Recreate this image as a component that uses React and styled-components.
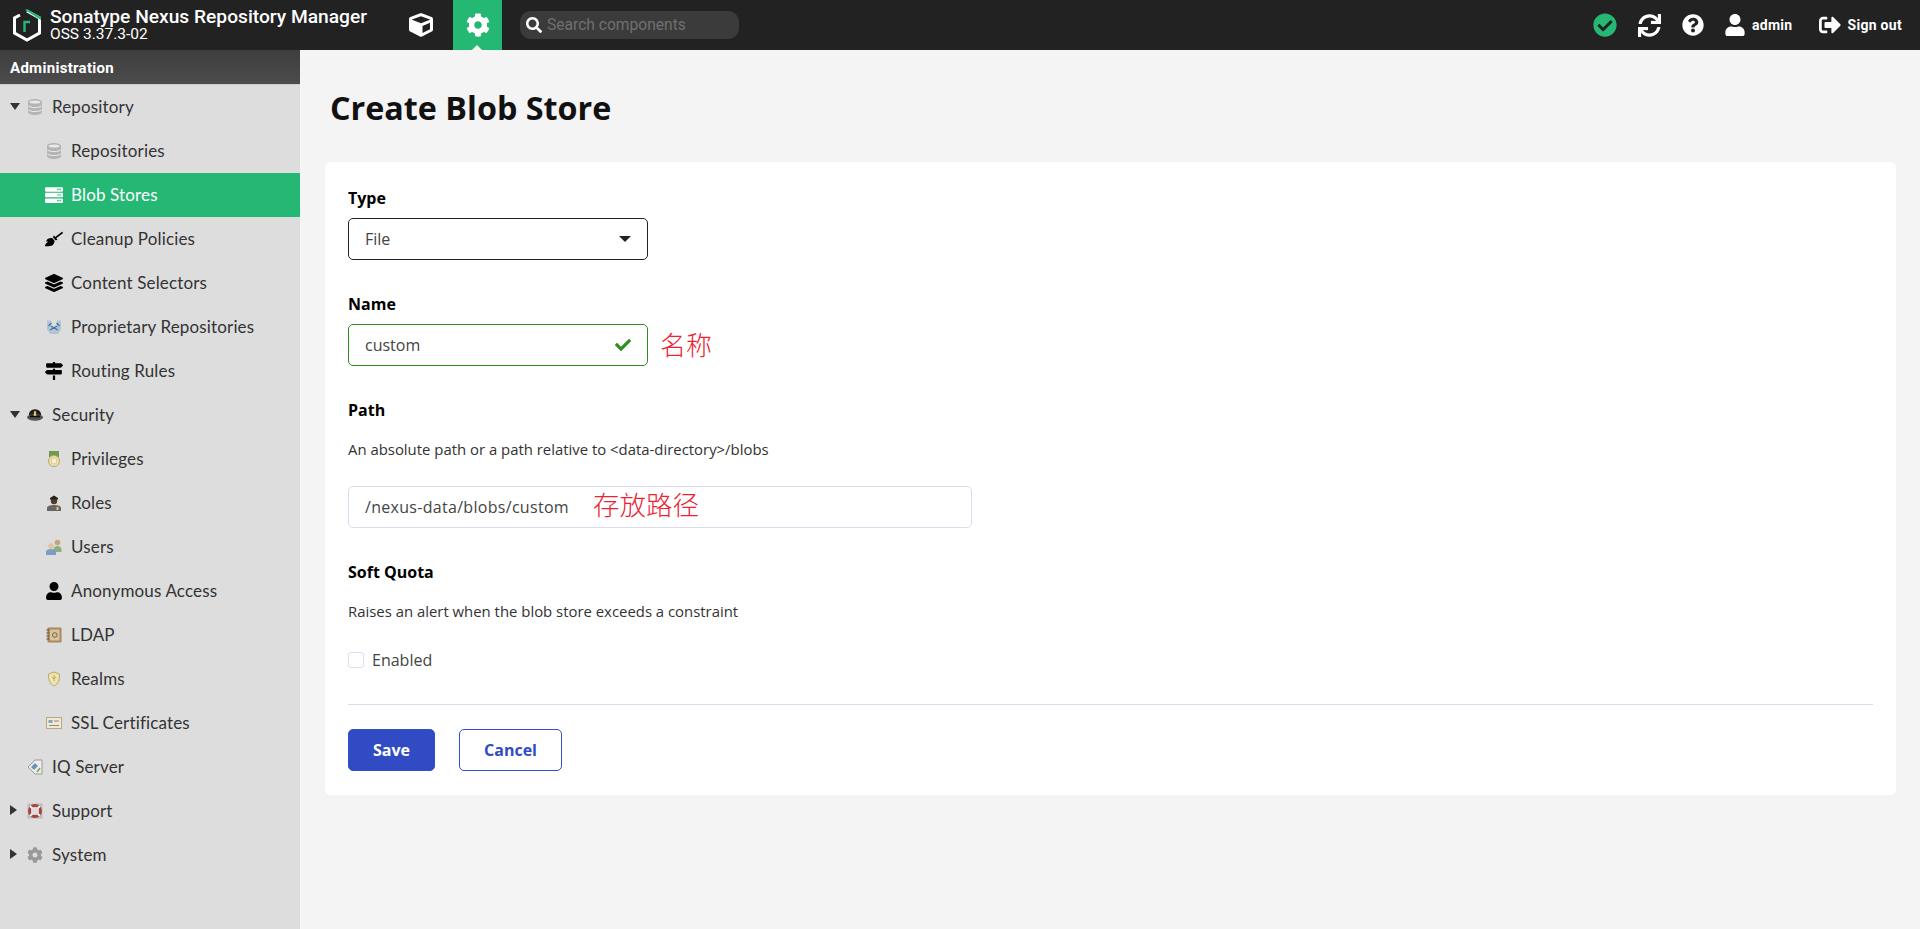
import React from 'react';
import styled, { createGlobalStyle } from 'styled-components';
import {
  FaCube, FaCog, FaSearch, FaCheckCircle, FaSync, FaQuestionCircle, FaUser,
  FaSignOutAlt, FaServer, FaBroom, FaLayerGroup, FaMapSigns, FaCheck,
} from 'react-icons/fa';

const GlobalStyle = createGlobalStyle`
  html, body { margin: 0; padding: 0; height: 100%; overflow: hidden; }
  body { font-family: "Open Sans", "Liberation Sans", sans-serif; background: #f4f4f4; }
  * { box-sizing: border-box; }
`;

const Shell = styled.div`
  display: grid;
  grid-template-columns: 300px 1fr;
  grid-template-rows: 50px 1fr;
  height: 929px;
`;

/* header */
const Header = styled.header`
  grid-column: 1 / 3;
  display: flex;
  align-items: center;
  background: #222;
  color: #fff;
  font-family: Roboto, "Liberation Sans", sans-serif;
`;

const Brand = styled.div`
  display: flex;
  align-items: center;
  gap: 8px;
  width: 396px;
  padding-left: 12px;
  flex: none;
`;

const BrandText = styled.div`
  display: flex;
  flex-direction: column;
`;

const BrandTitle = styled.span`
  font-size: 19.2px;
  font-weight: 500;
  line-height: 19px;
  white-space: nowrap;
`;

const BrandVersion = styled.span`
  font-size: 15.5px;
  line-height: 17px;
`;

const ModeTab = styled.div`
  position: relative;
  width: 49px;
  height: 50px;
  margin-right: ${(p) => p.$gap || 0}px;
  display: flex;
  align-items: center;
  justify-content: center;
  background: ${(p) => (p.$active ? '#25b875' : 'transparent')};
  font-size: 24px;
  &::after {
    content: '';
    display: ${(p) => (p.$active ? 'block' : 'none')};
    position: absolute;
    left: 19px;
    bottom: 0;
    border-left: 5px solid transparent;
    border-right: 5px solid transparent;
    border-bottom: 5px solid #f4f4f4;
  }
`;

const SearchBox = styled.div`
  width: 219px;
  height: 28px;
  margin-left: 18px;
  display: flex;
  align-items: center;
  gap: 5px;
  padding-left: 6px;
  background: #3b3b3b;
  border-radius: 11px;
  font-size: 15.6px;
  color: #707070;
  svg { color: #fff; font-size: 16px; }
`;

const HeaderRight = styled.div`
  margin-left: auto;
  display: flex;
  align-items: center;
  padding-right: 18px;
`;

const HeaderIcon = styled.span`
  display: flex;
  color: ${(p) => p.$color || '#fff'};
  font-size: ${(p) => p.$size || 22}px;
  margin-right: ${(p) => p.$gap || 0}px;
`;

const HeaderLabel = styled.span`
  font-size: 14px;
  font-weight: 700;
  letter-spacing: 0.3px;
  margin-right: ${(p) => p.$gap || 0}px;
`;

/* sidebar */
const Sidebar = styled.nav`
  background: #ddd;
  font-family: Lato, "Liberation Sans", sans-serif;
`;

const SideTitle = styled.div`
  height: 35px;
  padding: 1px 0 0 10px;
  display: flex;
  align-items: center;
  background: linear-gradient(#3e3e3e, #4c4c4c);
  border-bottom: 1px solid #ccc;
  color: #fff;
  font-size: 15px;
  font-weight: 700;
  letter-spacing: 0.3px;
  font-family: Roboto, "Liberation Sans", sans-serif;
`;

const NavRow = styled.div`
  position: relative;
  height: 44px;
  display: flex;
  align-items: center;
  padding-left: ${(p) => p.$indent}px;
  padding-bottom: 1px;
  font-size: 17px;
  letter-spacing: 0.15px;
  background: ${(p) => (p.$active ? '#25b875' : 'transparent')};
  color: ${(p) => (p.$active ? '#fff' : '#333')};
`;

const Caret = styled.span`
  position: absolute;
  left: 10px;
  top: 18px;
  width: 0;
  height: 0;
  ${(p) => (p.$open
    ? 'border-left: 5px solid transparent; border-right: 5px solid transparent; border-top: 7px solid #333;'
    : 'top: 16px; border-top: 5px solid transparent; border-bottom: 5px solid transparent; border-left: 7px solid #333;')}
`;

const NavIcon = styled.span`
  flex: none;
  width: ${(p) => p.$w}px;
  display: flex;
  align-items: center;
  justify-content: center;
  font-size: 18px;
  margin-right: ${(p) => p.$gap}px;
  color: ${(p) => (p.$active ? '#fff' : '#000')};
`;

/* colour icons */
const Svg = ({ children, size = 16 }) => (
  <svg width={size} height={size} viewBox="0 0 16 16">{children}</svg>
);

const LogoMark = () => (
  <svg width="30" height="33" viewBox="0 0 30 33" fill="none">
    <path d="M15 2 L27.5 9 V24 L15 31 L2.5 24 V9 L8 6" stroke="#fff" strokeWidth="3" />
    <path d="M13 1 L15 0 L29 8 V11 Z" fill="#25b875" />
    <path d="M12.5 23 V13 H18" stroke="#25b875" strokeWidth="2.4" />
  </svg>
);

const DbIcon = () => (
  <Svg>
    <path d="M1 3c0-4 14-4 14 0v10c0 4-14 4-14 0z" fill="#b4b4b4" />
    <ellipse cx="8" cy="3" rx="5.500" ry="1.600" fill="#e8e8e8" />
    <path d="M1.500 6.700c1.500 2.300 11.500 2.300 13 0M1.500 10.700c1.500 2.300 11.500 2.300 13 0" stroke="#ececec" strokeWidth="1.100" fill="none" />
  </Svg>
);

const ProprietaryIcon = () => (
  <Svg>
    <path d="M1 1.500h4v6l3 2 3-2v-6h4v8.500l-3 5H4l-3-5z" fill="#b4c3d3" />
    <path d="M2.500 7l3-3M13.500 7l-3-3M4 11l7-4M12 11L5 7" stroke="#3f78a6" strokeWidth="1.400" fill="none" />
  </Svg>
);

const CapIcon = () => (
  <svg width="17" height="12" viewBox="0 0 17 12">
    <path d="M2 6c0-3 2.500-6 6.500-6S15 3 15 6z" fill="#1c1c1c" />
    <ellipse cx="8.500" cy="8.500" rx="8.500" ry="3.500" fill="#555" />
    <path d="M3 7.500h11" stroke="#111" strokeWidth="2" />
    <rect x="7.300" y="2" width="2.400" height="5" fill="#e7c765" />
  </svg>
);

const MedalIcon = () => (
  <Svg>
    <rect x="3" y="0" width="10" height="6" fill="#6f9a52" />
    <circle cx="8" cy="10" r="5.500" fill="#efe2ae" stroke="#bba968" />
    <circle cx="8" cy="10" r="3" fill="#f7f0cf" stroke="#c9b97a" strokeWidth="0.700" />
  </Svg>
);

const RoleIcon = () => (
  <Svg>
    <path d="M1 16v-3c0-2 3-3 7-3s7 1 7 3v3z" fill="#666" />
    <circle cx="8" cy="6" r="3.200" fill="#5a3a22" />
    <path d="M4 3l4-2.500L12 3v1.500H4z" fill="#222" />
    <rect x="10.500" y="12" width="2" height="3" fill="#e7c765" />
  </Svg>
);

const UsersIcon = () => (
  <Svg>
    <circle cx="11.500" cy="3.500" r="2.800" fill="#c9a27c" />
    <path d="M7.500 11c0-3 2-4 4-4s4 1 4 4v2h-8z" fill="#8fae7a" />
    <circle cx="5" cy="7" r="2.800" fill="#e0c2a0" />
    <path d="M0 16v-3c0-2 2-3 5-3s5 1 5 3v3z" fill="#7d9ec4" />
  </Svg>
);

const LdapIcon = () => (
  <Svg>
    <rect x="1.500" y="0.500" width="14" height="15" rx="1" fill="#a98a5f" />
    <rect x="4" y="2.500" width="9.500" height="11" fill="#d6c39f" />
    <path d="M0.500 3h2.500M0.500 6h2.500M0.500 9h2.500M0.500 12h2.500" stroke="#5e4a2c" />
    <circle cx="8.800" cy="8" r="2.300" fill="none" stroke="#7b643f" />
  </Svg>
);

const ShieldIcon = () => (
  <Svg>
    <path d="M8 1l5.500 2c0 6-1 10-5.500 12C3.500 13 2.500 9 2.500 3z" fill="#efe3ae" stroke="#b9a968" />
    <path d="M8 4v6M6 6l2 2 2-2" stroke="#b9a968" fill="none" />
  </Svg>
);

const CertIcon = () => (
  <Svg>
    <rect x="0.500" y="2.500" width="15" height="11" fill="#f2ead0" stroke="#b8a986" />
    <rect x="2.500" y="5" width="4" height="3" fill="#8aa3bd" />
    <path d="M8 6h5M3 10.500h10" stroke="#8a8a8a" />
  </Svg>
);

const TagIcon = () => (
  <Svg>
    <path d="M1 8l7-7h7v14H8z" fill="#eee" stroke="#999" />
    <path d="M4 8l4-4 3 3-4 4z" fill="#6d93b8" />
    <path d="M10 13l3-4" stroke="#7fa04f" strokeWidth="1.500" />
  </Svg>
);

const BuoyIcon = () => (
  <Svg>
    <rect x="0.500" y="0.500" width="15" height="15" fill="#bdbdbd" />
    <circle cx="8" cy="8" r="5.500" fill="#ddd" stroke="#a8443c" strokeWidth="3" />
    <path d="M3 3l2.500 2.500M13 3l-2.500 2.500M3 13l2.500-2.500M13 13l-2.500-2.500" stroke="#eee" strokeWidth="2" />
  </Svg>
);

const GearIcon = () => <FaCog color="#999" size={16} />;

const NAV = [
  { label: 'Repository', icon: <DbIcon />, parent: true, open: true },
  { label: 'Repositories', icon: <DbIcon /> },
  { label: 'Blob Stores', icon: <FaServer />, active: true },
  { label: 'Cleanup Policies', icon: <FaBroom /> },
  { label: 'Content Selectors', icon: <FaLayerGroup /> },
  { label: 'Proprietary Repositories', icon: <ProprietaryIcon /> },
  { label: 'Routing Rules', icon: <FaMapSigns /> },
  { label: 'Security', icon: <CapIcon />, parent: true, open: true },
  { label: 'Privileges', icon: <MedalIcon /> },
  { label: 'Roles', icon: <RoleIcon /> },
  { label: 'Users', icon: <UsersIcon /> },
  { label: 'Anonymous Access', icon: <FaUser /> },
  { label: 'LDAP', icon: <LdapIcon /> },
  { label: 'Realms', icon: <ShieldIcon /> },
  { label: 'SSL Certificates', icon: <CertIcon /> },
  { label: 'IQ Server', icon: <TagIcon />, parent: true },
  { label: 'Support', icon: <BuoyIcon />, parent: true, open: false, caret: true },
  { label: 'System', icon: <GearIcon />, parent: true, open: false, caret: true },
];

/* main */
const Main = styled.main`
  padding: 37px 24px 0 25px;
  background: #f4f4f4;
  color: #000;
`;

const PageTitle = styled.h1`
  margin: 0 0 35px 5px;
  font-size: 32.3px;
  line-height: 40px;
  font-weight: 700;
  color: #111;
`;

const Card = styled.section`
  background: #fff;
  border-radius: 6px;
  height: 633px;
  padding: 26px 23px 0;
`;

const FieldLabel = styled.div`
  font-size: 16px;
  font-weight: 700;
  line-height: 20px;
  margin-top: ${(p) => p.$top || 0}px;
  margin-bottom: ${(p) => p.$bottom || 0}px;
`;

const Hint = styled.div`
  font-size: 14.9px;
  line-height: 20px;
  color: #333;
  margin-bottom: ${(p) => p.$bottom}px;
`;

const FieldRow = styled.div`
  display: flex;
  align-items: center;
  gap: 12px;
`;

const Field = styled.div`
  width: ${(p) => p.$width}px;
  height: 42px;
  display: flex;
  align-items: center;
  padding: 0 16px 1px;
  background: #fff;
  border: 1px solid ${(p) => p.$border};
  border-radius: 5px;
  font-size: 16px;
  letter-spacing: ${(p) => p.$spacing || 0}px;
  color: #444;
  svg { margin-left: auto; }
`;

const Note = styled.span`
  font-family: "Noto Sans CJK SC", sans-serif;
  font-size: ${(p) => p.$size}px;
  font-weight: 300;
  letter-spacing: 0;
  color: #ee2233;
  margin-left: ${(p) => p.$left || 0}px;
  padding-bottom: ${(p) => p.$lift}px;
`;

const DownCaret = styled.span`
  margin-left: auto;
  width: 0;
  height: 0;
  border-left: 6px solid transparent;
  border-right: 6px solid transparent;
  border-top: 6px solid #222;
`;

const CheckRow = styled.label`
  display: flex;
  align-items: center;
  gap: 8px;
  font-size: 16px;
  line-height: 24px;
  color: #444;
`;

const CheckSquare = styled.span`
  width: 16px;
  height: 16px;
  border: 1px solid #dddcee;
  border-radius: 3px;
  background: #fff;
`;

const Divider = styled.hr`
  margin: 32px 0 24px;
  border: 0;
  border-top: 1px solid #dddcee;
`;

const Buttons = styled.div`
  display: flex;
  gap: 24px;
`;

const Button = styled.button`
  height: 42px;
  width: ${(p) => p.$width}px;
  padding: 0;
  border-radius: 5px;
  border: 1px solid #3450c8;
  background: ${(p) => (p.$primary ? '#304bc4' : '#fff')};
  color: ${(p) => (p.$primary ? '#fff' : '#304bc4')};
  font-family: inherit;
  font-size: 16px;
  font-weight: 700;
`;

export default function App() {
  return (
    <Shell>
      <GlobalStyle />
      <Header>
        <Brand>
          <LogoMark />
          <BrandText>
            <BrandTitle>Sonatype Nexus Repository Manager</BrandTitle>
            <BrandVersion>OSS 3.37.3-02</BrandVersion>
          </BrandText>
        </Brand>
        <ModeTab $gap={8}><FaCube /></ModeTab>
        <ModeTab $active><FaCog /></ModeTab>
        <SearchBox><FaSearch />Search components</SearchBox>
        <HeaderRight>
          <HeaderIcon $color="#25b875" $size={24} $gap={21}><FaCheckCircle /></HeaderIcon>
          <HeaderIcon $size={23} $gap={21}><FaSync /></HeaderIcon>
          <HeaderIcon $size={22} $gap={20}><FaQuestionCircle /></HeaderIcon>
          <HeaderIcon $size={22} $gap={6}><FaUser /></HeaderIcon>
          <HeaderLabel $gap={27}>admin</HeaderLabel>
          <HeaderIcon $size={22} $gap={6}><FaSignOutAlt /></HeaderIcon>
          <HeaderLabel>Sign out</HeaderLabel>
        </HeaderRight>
      </Header>
      <Sidebar>
        <SideTitle>Administration</SideTitle>
        {NAV.map((item) => (
          <NavRow key={item.label} $active={item.active} $indent={item.parent ? 27 : 45}>
            {item.parent && (item.open || item.caret) && <Caret $open={item.open} />}
            <NavIcon $w={item.parent ? 16 : 18} $gap={item.parent ? 9 : 8} $active={item.active}>
              {item.icon}
            </NavIcon>
            {item.label}
          </NavRow>
        ))}
      </Sidebar>
      <Main>
        <PageTitle>Create Blob Store</PageTitle>
        <Card>
          <FieldLabel $bottom={10}>Type</FieldLabel>
          <Field $width={300} $border="#222">File<DownCaret /></Field>

          <FieldLabel $top={34} $bottom={10}>Name</FieldLabel>
          <FieldRow>
            <Field $width={300} $border="#2e8f1f">custom<FaCheck color="#2e8f1f" size={16} /></Field>
            <Note $size={26} $lift={4}>名称</Note>
          </FieldRow>

          <FieldLabel $top={34} $bottom={19}>Path</FieldLabel>
          <Hint $bottom={27}>An absolute path or a path relative to &lt;data-directory&gt;/blobs</Hint>
          <Field $width={624} $border="#dddcee" $spacing={0.3}>
            /nexus-data/blobs/custom
            <Note $left={24} $size={26.500} $lift={6}>存放路径</Note>
          </Field>

          <FieldLabel $top={34} $bottom={19}>Soft Quota</FieldLabel>
          <Hint $bottom={27}>Raises an alert when the blob store exceeds a constraint</Hint>
          <CheckRow><CheckSquare />Enabled</CheckRow>

          <Divider />
          <Buttons>
            <Button $primary $width={87}>Save</Button>
            <Button $width={103}>Cancel</Button>
          </Buttons>
        </Card>
      </Main>
    </Shell>
  );
}
